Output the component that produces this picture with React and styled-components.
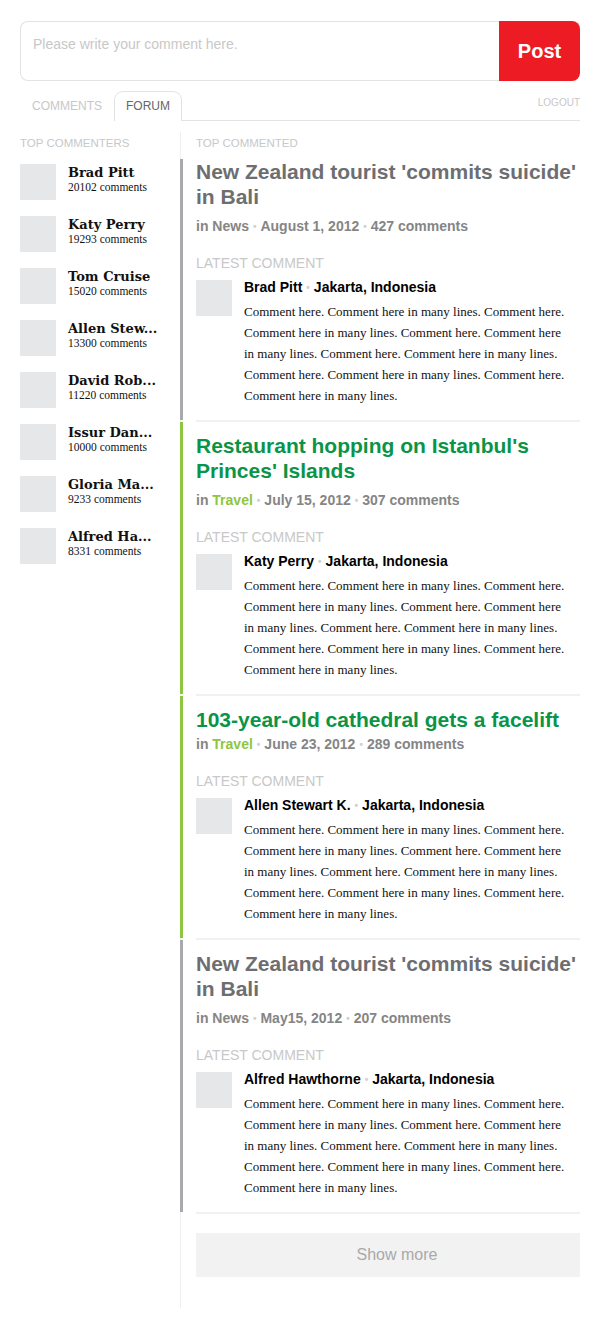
import React from "react";
import styled, { createGlobalStyle } from "styled-components";

const GlobalStyle = createGlobalStyle`
	body {
		margin: 0;
		background: #fff;
		font-family: "Liberation Sans", Arial, sans-serif;
	}
`;

const SANS = `"Liberation Sans", Arial, sans-serif`;
const SERIF = `"Liberation Serif", "Times New Roman", serif`;
const GEORGIA = `"DejaVu Serif", Georgia, serif`;

const Page = styled.div`
	width: 560px;
	padding: 21px 20px 0 20px;
`;

const CommentForm = styled.form`
	display: flex;
	height: 60px;
	margin: 0;
`;

const CommentInput = styled.textarea`
	flex: 1;
	box-sizing: border-box;
	height: 60px;
	margin: 0;
	padding: 13px 12px;
	border: 1px solid #e3e3e3;
	border-right: none;
	border-radius: 8px 0 0 8px;
	resize: none;
	outline: none;
	font-family: ${SANS};
	font-size: 14px;
	line-height: 18px;
	color: #333;

	&::placeholder {
		color: #c8c8c8;
	}
`;

const PostButton = styled.button`
	width: 81px;
	height: 60px;
	border: none;
	border-radius: 0 8px 8px 0;
	background: #ed1c24;
	color: #fff;
	font-family: ${SANS};
	font-weight: bold;
	font-size: 20px;
	cursor: pointer;
`;

const TabBar = styled.div`
	display: flex;
	align-items: flex-start;
	margin-top: 10px;
	height: 29px;
	border-bottom: 1px solid #e3e3e3;
`;

const Tab = styled.div`
	box-sizing: border-box;
	height: 30px;
	padding: 0 11px;
	margin-bottom: -1px;
	border: 1px solid ${(p) => (p.$active ? "#e3e3e3" : "transparent")};
	border-bottom: none;
	border-radius: 9px 9px 0 0;
	background: #fff;
	font-size: 12px;
	line-height: 28px;
	color: ${(p) => (p.$active ? "#666" : "#c8c8c8")};
`;

const Logout = styled.a`
	margin-left: auto;
	padding-top: 6px;
	font-size: 10px;
	line-height: 12px;
	color: #c8c8c8;
	text-decoration: none;
`;

const Columns = styled.div`
	display: flex;
	margin-top: 11px;
`;

const Sidebar = styled.aside`
	width: 160px;
	flex-shrink: 0;
	padding-top: 4px;
`;

const Label = styled.div`
	font-size: ${(p) => p.$size || "11.5px"};
	line-height: ${(p) => p.$line || "14px"};
	color: #c8c8c8;
	text-transform: uppercase;
	padding-left: ${(p) => p.$indent || "0"};
`;

const CommenterList = styled.ul`
	list-style: none;
	margin: 14px 0 0 0;
	padding: 0;
	display: flex;
	flex-direction: column;
	gap: 16px;
`;

const CommenterRow = styled.li`
	display: flex;
	gap: 12px;
`;

const Avatar = styled.div`
	width: 36px;
	height: 36px;
	flex-shrink: 0;
	background: #e6e7e8;
`;

const CommenterInfo = styled.div`
	padding-top: 1px;
	white-space: nowrap;
`;

const CommenterName = styled.div`
	font-family: ${GEORGIA};
	font-weight: bold;
	font-size: 13px;
	line-height: 16px;
	color: #111;
`;

const CommenterCount = styled.div`
	font-family: ${SERIF};
	font-size: 11.5px;
	line-height: 12px;
	color: #111;
`;

const Main = styled.main`
	flex: 1;
	border-left: 1px solid #efefef;
	padding-top: 4px;
	padding-bottom: 31px;
`;

const Articles = styled.div`
	margin-top: 9px;
`;

const ArticleBody = styled.article`
	margin-left: -1px;
	border-left: 3px solid ${(p) => (p.$green ? "#8dc63f" : "#a7a9ac")};
	padding: ${(p) => (p.$first ? "0" : "11px")} 0 14px 13px;
`;

const Title = styled.h2`
	margin: 0;
	font-size: 21px;
	line-height: 25px;
	font-weight: bold;
	color: ${(p) => (p.$green ? "#0a9447" : "#6d6e71")};
`;

const Meta = styled.div`
	margin-top: ${(p) => (p.$tight ? "3px" : "8px")};
	font-size: 14px;
	line-height: 18px;
	font-weight: bold;
	color: #858585;
`;

const Category = styled.span`
	color: ${(p) => (p.$green ? "#8dc63f" : "#858585")};
`;

const Dot = styled.span`
	color: #d0d0d0;
	font-size: 10px;
	margin: 0 4px;
	vertical-align: 1px;
`;

const LatestLabel = styled(Label)`
	margin-top: 18px;
`;

const CommentRow = styled.div`
	display: flex;
	gap: 12px;
	margin-top: 8px;
`;

const CommentContent = styled.div`
	flex: 1;
	padding-right: 9px;
`;

const Author = styled.div`
	font-size: 14px;
	line-height: 14px;
	font-weight: bold;
	color: #000;
`;

const CommentText = styled.p`
	margin: 6px 0 0 0;
	font-family: ${SERIF};
	font-size: 13px;
	line-height: 21px;
	color: #111;
`;

const Divider = styled.div`
	height: 2px;
	margin-left: 15px;
	background: #f1f1f1;
`;

const ShowMore = styled.button`
	display: block;
	width: calc(100% - 15px);
	margin: 19px 0 0 15px;
	height: 44px;
	padding: 0 0 0 18px;
	border: none;
	background: #f2f2f2;
	color: #a9a9a9;
	font-family: ${SANS};
	font-size: 16px;
	cursor: pointer;
`;

const commenters = [
	{ name: "Brad Pitt", count: 20102 },
	{ name: "Katy Perry", count: 19293 },
	{ name: "Tom Cruise", count: 15020 },
	{ name: "Allen Stew...", count: 13300 },
	{ name: "David Rob...", count: 11220 },
	{ name: "Issur Dan...", count: 10000 },
	{ name: "Gloria Ma...", count: 9233 },
	{ name: "Alfred Ha...", count: 8331 },
];

const COMMENT =
	"Comment here. Comment here in many lines. Comment here. Comment here in many lines. Comment here. Comment here in many lines. Comment here. Comment here in many lines. Comment here. Comment here in many lines. Comment here. Comment here in many lines.";

const articles = [
	{
		title: "New Zealand tourist 'commits suicide' in Bali",
		category: "News",
		date: "August 1, 2012",
		comments: 427,
		author: "Brad Pitt",
	},
	{
		title: "Restaurant hopping on Istanbul's Princes' Islands",
		category: "Travel",
		green: true,
		date: "July 15, 2012",
		comments: 307,
		author: "Katy Perry",
	},
	{
		title: "103-year-old cathedral gets a facelift",
		category: "Travel",
		green: true,
		tight: true,
		date: "June 23, 2012",
		comments: 289,
		author: "Allen Stewart K.",
	},
	{
		title: "New Zealand tourist 'commits suicide' in Bali",
		category: "News",
		date: "May15, 2012",
		comments: 207,
		author: "Alfred Hawthorne",
	},
];

const Article = ({ item, first }) => (
	<>
		<ArticleBody $green={item.green} $first={first}>
			<Title $green={item.green}>{item.title}</Title>
			<Meta $tight={item.tight}>
				in <Category $green={item.green}>{item.category}</Category>
				<Dot>•</Dot>
				{item.date}
				<Dot>•</Dot>
				{item.comments} comments
			</Meta>
			<LatestLabel $size="14px" $line="18px">
				Latest comment
			</LatestLabel>
			<CommentRow>
				<Avatar />
				<CommentContent>
					<Author>
						{item.author}
						<Dot>•</Dot>
						Jakarta, Indonesia
					</Author>
					<CommentText>{COMMENT}</CommentText>
				</CommentContent>
			</CommentRow>
		</ArticleBody>
		<Divider />
	</>
);

const App = () => {
	return (
		<>
			<GlobalStyle />
			<Page>
				<CommentForm onSubmit={(e) => e.preventDefault()}>
					<CommentInput placeholder="Please write your comment here." />
					<PostButton type="submit">Post</PostButton>
				</CommentForm>

				<TabBar>
					<Tab>COMMENTS</Tab>
					<Tab $active>FORUM</Tab>
					<Logout href="#">LOGOUT</Logout>
				</TabBar>

				<Columns>
					<Sidebar>
						<Label>Top commenters</Label>
						<CommenterList>
							{commenters.map((c) => (
								<CommenterRow key={c.name}>
									<Avatar />
									<CommenterInfo>
										<CommenterName>{c.name}</CommenterName>
										<CommenterCount>{c.count} comments</CommenterCount>
									</CommenterInfo>
								</CommenterRow>
							))}
						</CommenterList>
					</Sidebar>

					<Main>
						<Label $indent="15px">Top commented</Label>
						<Articles>
							{articles.map((a, i) => (
								<Article key={i} item={a} first={i === 0} />
							))}
						</Articles>
						<ShowMore>Show more</ShowMore>
					</Main>
				</Columns>
			</Page>
		</>
	);
};

export default App;
